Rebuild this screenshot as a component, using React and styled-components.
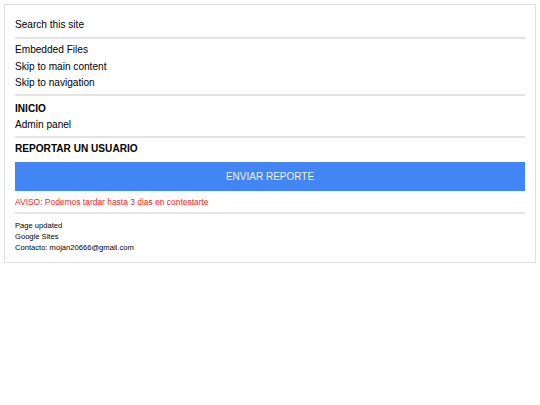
import React from "react";
import styled, { createGlobalStyle } from "styled-components";

const Global = createGlobalStyle`
  html, body { margin: 0; padding: 0; background: #fff; }
  body { font-family: "Liberation Sans", Arial, sans-serif; color: #000; }
`;

const Card = styled.div`
  margin: 4px;
  border: 1px solid #e0e0e0;
  padding: 12px 10px 9px;
  background: #fff;
`;

const Section = styled.div`
  display: flex;
  flex-direction: column;
  padding-top: ${(p) => p.$top || 0}px;
  padding-bottom: ${(p) => p.$bottom || 0}px;
  border-bottom: ${(p) => (p.$divider ? "2px solid #e3e3e3" : "none")};
`;

const Line = styled.div`
  font-size: 10.1px;
  line-height: ${(p) => p.$lh || 16}px;
  font-weight: ${(p) => (p.$bold ? 700 : 400)};
  color: #000;
`;

const Button = styled.div`
  margin-top: 5px;
  height: 28.5px;
  background: #4285f4;
  color: #eef3fd;
  font-size: 10px;
  display: flex;
  align-items: center;
  justify-content: center;
`;

const Notice = styled.div`
  margin-top: 5.5px;
  font-size: 8.45px;
  line-height: 12px;
  color: #ea2a2a;
`;

const Footer = styled.div`
  display: flex;
  flex-direction: column;
  padding-top: 6px;
`;

const FooterLine = styled.div`
  font-size: 7.6px;
  line-height: 11px;
  color: #000;
`;

export default function App() {
  return (
    <>
      <Global />
      <Card>
        <Section $divider $bottom={4}>
          <Line>Search this site</Line>
        </Section>
        <Section $divider $top={3} $bottom={2.5}>
          <Line $lh={16.5}>Embedded Files</Line>
          <Line $lh={16.5}>Skip to main content</Line>
          <Line $lh={16.5}>Skip to navigation</Line>
        </Section>
        <Section $divider $top={5} $bottom={3}>
          <Line $bold>INICIO</Line>
          <Line>Admin panel</Line>
        </Section>
        <Section $divider $top={3} $bottom={4}>
          <Line $bold>REPORTAR UN USUARIO</Line>
          <Button>ENVIAR REPORTE</Button>
          <Notice>AVISO: Podemos tardar hasta 3 dias en contestarte</Notice>
        </Section>
        <Footer>
          <FooterLine>Page updated</FooterLine>
          <FooterLine>Google Sites</FooterLine>
          <FooterLine>Contacto: mojan20666@gmail.com</FooterLine>
        </Footer>
      </Card>
    </>
  );
}
